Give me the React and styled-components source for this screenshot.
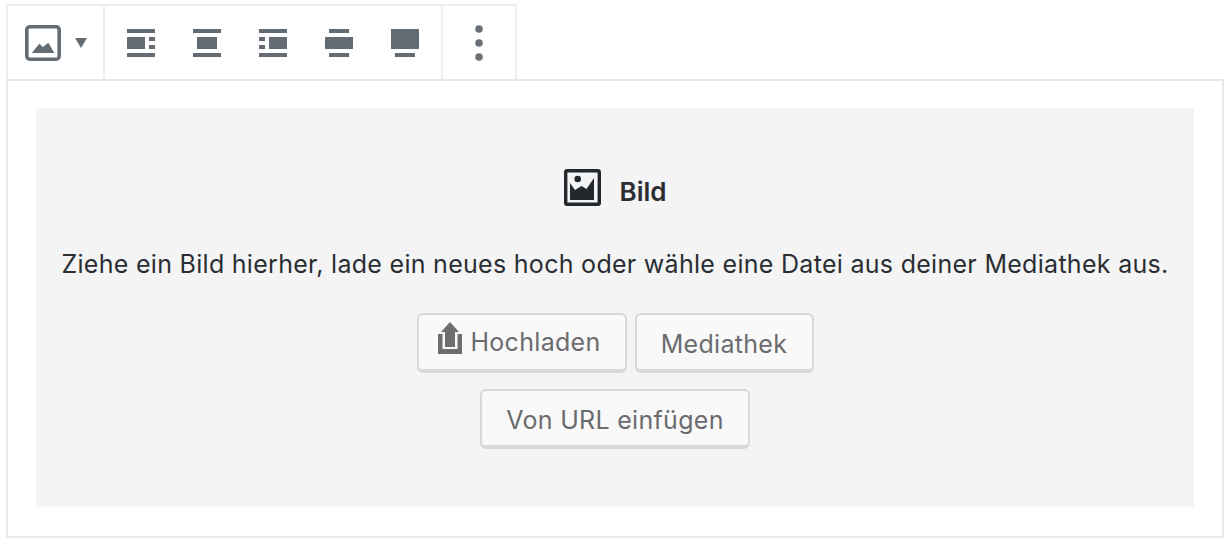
import React from 'react';
import styled, { createGlobalStyle } from 'styled-components';

const GlobalStyle = createGlobalStyle`
  html, body {
    margin: 0;
    padding: 0;
    background: #fff;
  }
  body {
    font-family: Inter, "Liberation Sans", sans-serif;
  }
`;

const Page = styled.div`
  width: 1230px;
  height: 543px;
  padding: 4px 6px 0;
  box-sizing: border-box;
  overflow: hidden;
`;

const Toolbar = styled.div`
  display: flex;
  width: 511px;
  height: 75px;
  box-sizing: border-box;
  border: 2px solid #eeeef0;
  border-bottom: 0;
`;

const Group = styled.div`
  display: flex;
  align-items: center;
  box-sizing: border-box;
  width: ${(p) => p.$width}px;
  padding-left: ${(p) => p.$pad || 0}px;
  border-right: ${(p) => (p.$last ? '0' : '2px solid #eeeef0')};
`;

const ToolButton = styled.div`
  display: flex;
  align-items: center;
  justify-content: center;
  width: ${(p) => p.$width || 66}px;
  height: 73px;
  flex: none;
`;

const Block = styled.div`
  width: 1218px;
  height: 459px;
  box-sizing: border-box;
  border: 2px solid #e8e8ea;
  padding: 27px 28px 29px;
`;

const Placeholder = styled.div`
  display: flex;
  flex-direction: column;
  align-items: center;
  height: 399px;
  padding-top: 60px;
  box-sizing: border-box;
  background: #f4f4f5;
`;

const Title = styled.div`
  display: flex;
  align-items: center;
  gap: 19px;
  height: 38px;
  font-size: 26px;
  font-weight: 600;
  color: #2a2e33;
`;

const TitleText = styled.span`
  padding-top: 8px;
`;

const Hint = styled.p`
  margin: 38px 0 0;
  font-size: 25px;
  line-height: 40px;
  letter-spacing: 0.29px;
  color: #2a2e33;
  white-space: nowrap;
`;

const Actions = styled.div`
  display: flex;
  flex-wrap: wrap;
  justify-content: center;
  gap: 16px 8px;
  width: 420px;
  margin-top: 29px;
`;

const Button = styled.button`
  display: flex;
  align-items: center;
  justify-content: center;
  gap: 8px;
  width: ${(p) => p.$width}px;
  height: 60px;
  padding: ${(p) => (p.$icon ? '0 4px 0 0' : '4px 0 0')};
  box-sizing: border-box;
  border: 2px solid #d8d8da;
  border-bottom-width: 4px;
  border-radius: 6px;
  background: #f9f9f9;
  font-family: inherit;
  font-size: 25px;
  letter-spacing: 0.3px;
  color: #6b6b6e;

  svg {
    margin-bottom: 8px;
  }
`;

const ICON = '#646b73';

const Bars = ({ top, mid, dashes, bottom }) => (
  <svg width="28" height="28" viewBox="0 0 28 28" fill={ICON}>
    <rect x={top[0]} y="0" width={top[1]} height="4" />
    <rect x={mid[0]} y={mid[2] ?? 8} width={mid[1]} height={mid[3] ?? 12} />
    {dashes !== undefined && (
      <>
        <rect x={dashes} y="8" width="6" height="4" />
        <rect x={dashes} y="16" width="6" height="4" />
      </>
    )}
    <rect x={bottom[0]} y="24" width={bottom[1]} height="4" />
  </svg>
);

const ImageIcon = () => (
  <svg width="36" height="36" viewBox="0 0 36 36">
    <rect x="1.800" y="1.800" width="32.400" height="32.400" rx="3" fill="none" stroke={ICON} strokeWidth="3.600" />
    <path d="M6.700 28l7.600-9.300 3.700 3.300 5.300-4.300 6 10.300z" fill={ICON} />
  </svg>
);

const Caret = () => (
  <svg width="12" height="10" viewBox="0 0 12 10" fill={ICON}>
    <path d="M0 0h12L6 10z" />
  </svg>
);

const Dots = () => (
  <svg width="10" height="38" viewBox="0 0 10 38" fill="#6c7177">
    <circle cx="5" cy="5" r="3.800" />
    <circle cx="5" cy="19" r="3.800" />
    <circle cx="5" cy="33" r="3.800" />
  </svg>
);

const PictureIcon = () => (
  <svg width="37" height="37" viewBox="0 0 37 37">
    <rect x="1.700" y="1.700" width="33.600" height="33.600" rx="1.500" fill="none" stroke="#23282d" strokeWidth="3.400" />
    <circle cx="13.700" cy="10" r="3.300" fill="#23282d" />
    <path d="M6 14l5 7 6.500-4 5 3 7.500-11v22H6z" fill="#23282d" />
  </svg>
);

const UploadIcon = () => (
  <svg width="24" height="32" viewBox="0 0 24 32" fill="#6e6e70">
    <path d="M12 0l9 10h-4v15H7V10H3z" />
    <path d="M0 12h4.500v15h15V12H24v20H0z" />
  </svg>
);

export default function App() {
  return (
    <>
      <GlobalStyle />
      <Page>
        <Toolbar>
          <Group $width={97} $pad={10}>
            <ToolButton $width={50}><ImageIcon /></ToolButton>
            <ToolButton $width={26}><Caret /></ToolButton>
          </Group>
          <Group $width={338} $pad={3}>
            <ToolButton><Bars top={[0, 28]} mid={[0, 18]} dashes={22} bottom={[0, 28]} /></ToolButton>
            <ToolButton><Bars top={[0, 28]} mid={[4, 20]} bottom={[0, 28]} /></ToolButton>
            <ToolButton><Bars top={[0, 28]} mid={[10, 18]} dashes={0} bottom={[0, 28]} /></ToolButton>
            <ToolButton><Bars top={[4, 20]} mid={[0, 28]} bottom={[4, 20]} /></ToolButton>
            <ToolButton><Bars top={[0, 28]} mid={[0, 28, 0, 20]} bottom={[4, 20]} /></ToolButton>
          </Group>
          <Group $width={72} $last>
            <ToolButton $width={72}><Dots /></ToolButton>
          </Group>
        </Toolbar>
        <Block>
          <Placeholder>
            <Title><PictureIcon /><TitleText>Bild</TitleText></Title>
            <Hint>Ziehe ein Bild hierher, lade ein neues hoch oder wähle eine Datei aus deiner Mediathek aus.</Hint>
            <Actions>
              <Button $width={210} $icon><UploadIcon />Hochladen</Button>
              <Button $width={179}>Mediathek</Button>
              <Button $width={270}>Von URL einfügen</Button>
            </Actions>
          </Placeholder>
        </Block>
      </Page>
    </>
  );
}
